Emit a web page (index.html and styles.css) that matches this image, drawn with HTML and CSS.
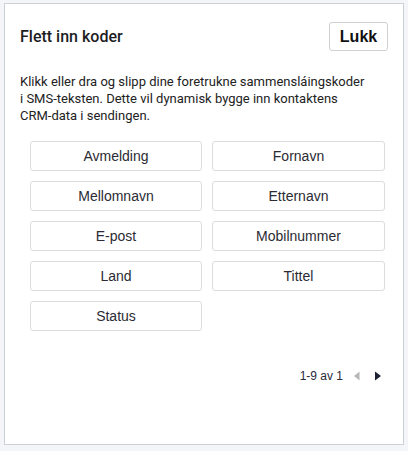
FILE: index.html
```html
<!DOCTYPE html>
<html lang="no">
<head>
<meta charset="utf-8">
<link rel="stylesheet" href="styles.css">
</head>
<body>
<div class="panel">
  <div class="header">
    <h2 class="title">Flett inn koder</h2>
    <button class="close">Lukk</button>
  </div>
  <p class="desc">Klikk eller dra og slipp dine foretrukne sammensláingskoder i SMS-teksten. Dette vil dynamisk bygge inn kontaktens CRM-data i sendingen.</p>
  <div class="codes">
    <button class="code">Avmelding</button>
    <button class="code">Fornavn</button>
    <button class="code">Mellomnavn</button>
    <button class="code">Etternavn</button>
    <button class="code">E-post</button>
    <button class="code">Mobilnummer</button>
    <button class="code">Land</button>
    <button class="code">Tittel</button>
    <button class="code">Status</button>
  </div>
  <div class="pager">
    <span class="range">1-9 av 1</span>
    <span class="arrow prev"><svg width="16" height="16" viewBox="0 0 16 16"><path d="M10.5 3.5 L5 8 L10.5 12.5 Z" fill="#b8b8b8"/></svg></span>
    <span class="arrow next"><svg width="16" height="16" viewBox="0 0 16 16"><path d="M5 3.5 L11 8 L5 12.5 Z" fill="#1c2230"/></svg></span>
  </div>
</div>
</body>
</html>
```

FILE: styles.css
```css
html, body {
  margin: 0;
  padding: 0;
  background: #f3f5f8;
}
body {
  padding: 3px 4px 0 4px;
}
.panel {
  box-sizing: border-box;
  width: 400px;
  height: 442px;
  background: #fff;
  border: 1px solid #ccd1d8;
  padding: 18px 15px 0 15px;
}
.header {
  display: flex;
  align-items: center;
  justify-content: space-between;
}
.title {
  margin: 0;
  font-family: Roboto, "Liberation Sans", sans-serif;
  font-weight: 500;
  font-size: 16px;
  color: #1d1d1f;
}
.close {
  box-sizing: border-box;
  width: 59px;
  height: 29px;
  background: #fff;
  border: 1px solid #d0d0d0;
  border-radius: 3px;
  font-family: "Liberation Sans", Arial, sans-serif;
  font-weight: bold;
  font-size: 16px;
  color: #111;
  padding: 0;
}
.desc {
  margin: 22px 0 0 0;
  width: 350px;
  font-family: Roboto, "Liberation Sans", sans-serif;
  font-size: 13px;
  line-height: 17px;
  color: #222;
}
.codes {
  margin: 17px 0 0 10px;
  display: grid;
  grid-template-columns: 172px 173px;
  gap: 10px;
}
.code {
  box-sizing: border-box;
  height: 30px;
  background: #fff;
  border: 1px solid #dcdcdc;
  border-radius: 3px;
  font-family: "Liberation Sans", Arial, sans-serif;
  font-size: 14px;
  color: #2b2b33;
  padding: 0;
}
.pager {
  display: flex;
  justify-content: flex-end;
  align-items: center;
  margin-top: 37px;
  padding-right: 2px;
  font-family: "Liberation Sans", Arial, sans-serif;
  font-size: 12px;
  color: #2a2a3a;
}
.range {
  margin-right: 6px;
}
.arrow {
  display: flex;
  width: 16px;
  height: 16px;
}
.prev {
  margin-right: 5px;
}
```
